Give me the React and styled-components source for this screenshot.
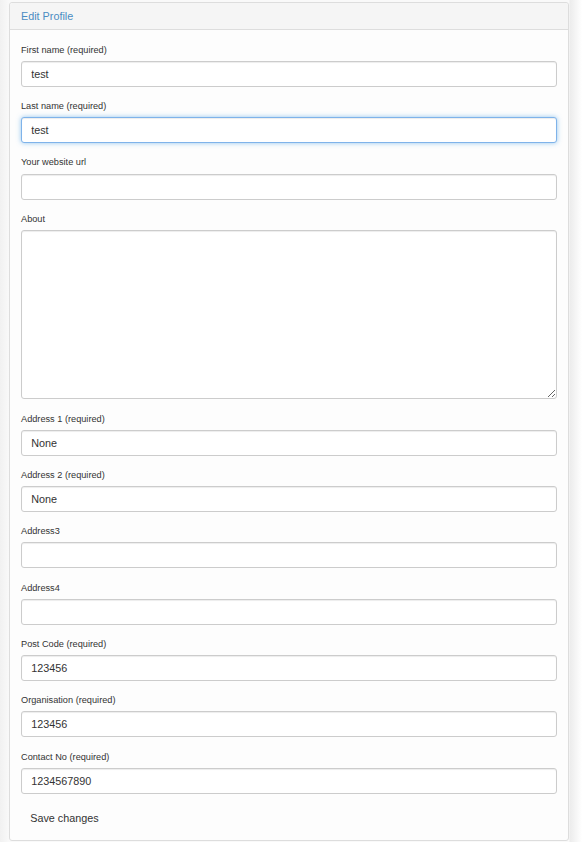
import React from 'react';
import styled, { createGlobalStyle } from 'styled-components';

const fields = [
  { id: 'first', label: 'First name (required)', value: 'test' },
  { id: 'last', label: 'Last name (required)', value: 'test', focused: true },
  { id: 'url', label: 'Your website url', value: '' },
  { id: 'about', label: 'About', value: '', multiline: true },
  { id: 'addr1', label: 'Address 1 (required)', value: 'None' },
  { id: 'addr2', label: 'Address 2 (required)', value: 'None' },
  { id: 'addr3', label: 'Address3', value: '' },
  { id: 'addr4', label: 'Address4', value: '' },
  { id: 'post', label: 'Post Code (required)', value: '123456' },
  { id: 'org', label: 'Organisation (required)', value: '123456' },
  { id: 'contact', label: 'Contact No (required)', value: '1234567890' },
];

const App = () => {
  return (
    <>
      <GlobalStyle />
      <Page>
        <Panel>
          <PanelHeading>Edit Profile</PanelHeading>
          <PanelBody>
            <form onSubmit={(e) => e.preventDefault()}>
              {fields.map((f) => (
                <FormGroup key={f.id}>
                  <Label htmlFor={f.id}>{f.label}</Label>
                  {f.multiline ? (
                    <TextArea id={f.id} defaultValue={f.value} />
                  ) : (
                    <Input
                      id={f.id}
                      type="text"
                      defaultValue={f.value}
                      $focused={f.focused}
                      autoFocus={f.focused}
                    />
                  )}
                </FormGroup>
              ))}
              <SaveButton type="submit">Save changes</SaveButton>
            </form>
          </PanelBody>
        </Panel>
      </Page>
    </>
  );
};

const GlobalStyle = createGlobalStyle`
  html, body {
    margin: 0;
    padding: 0;
  }
  body {
    font-family: "Liberation Sans", Arial, sans-serif;
    color: #333;
    background: linear-gradient(
      to right,
      #f1f1f1 0px,
      #f9f9f9 9px,
      #f9f9f9 569px,
      #ececec 570px,
      #ffffff 582px
    );
    min-height: 842px;
  }
  * {
    box-sizing: border-box;
  }
`;

const Page = styled.div`
  width: 582px;
  padding: 2px 13px 0 9px;
`;

const Panel = styled.div`
  background: #fdfdfd;
  border: 1px solid #dddddd;
  border-radius: 3px;
`;

const PanelHeading = styled.div`
  height: 27px;
  display: flex;
  align-items: center;
  padding: 0 11px;
  background: #f5f5f5;
  border-bottom: 1px solid #dddddd;
  border-radius: 3px 3px 0 0;
  color: #4a8cc2;
  font-size: 10.8px;
`;

const PanelBody = styled.div`
  padding: 13.7px 11px 11.5px 11px;
`;

const FormGroup = styled.div`
  margin-bottom: 13.15px;
`;

const Label = styled.label`
  display: block;
  font-size: 9.2px;
  line-height: 13.2px;
  margin-bottom: 4px;
  color: #333;
`;

const Input = styled.input`
  display: block;
  width: 100%;
  height: 26px;
  padding: 0 9.2px;
  font-family: "Liberation Sans", Arial, sans-serif;
  font-size: 10.8px;
  color: #333;
  background: #fff;
  border: 1px solid ${(p) => (p.$focused ? '#7fb3ea' : '#cccccc')};
  border-radius: 3px;
  box-shadow: ${(p) =>
    p.$focused
      ? 'inset 0 1px 1px rgba(0,0,0,.075), 0 0 5px rgba(102,175,233,.7)'
      : 'inset 0 1px 1px rgba(0,0,0,.075)'};
  outline: none;
`;

const TextArea = styled.textarea`
  display: block;
  width: 100%;
  height: 169.5px;
  padding: 5px 9.2px;
  font-family: "Liberation Sans", Arial, sans-serif;
  font-size: 10.8px;
  color: #333;
  background: #fff;
  border: 1px solid #cccccc;
  border-radius: 3px;
  box-shadow: inset 0 1px 1px rgba(0,0,0,.075);
  outline: none;
  resize: vertical;
`;

const SaveButton = styled.button`
  display: inline-block;
  height: 22px;
  padding: 0 9.2px;
  font-family: "Liberation Sans", Arial, sans-serif;
  font-size: 10.8px;
  color: #333;
  background: transparent;
  border: none;
  cursor: pointer;
`;

export default App;
